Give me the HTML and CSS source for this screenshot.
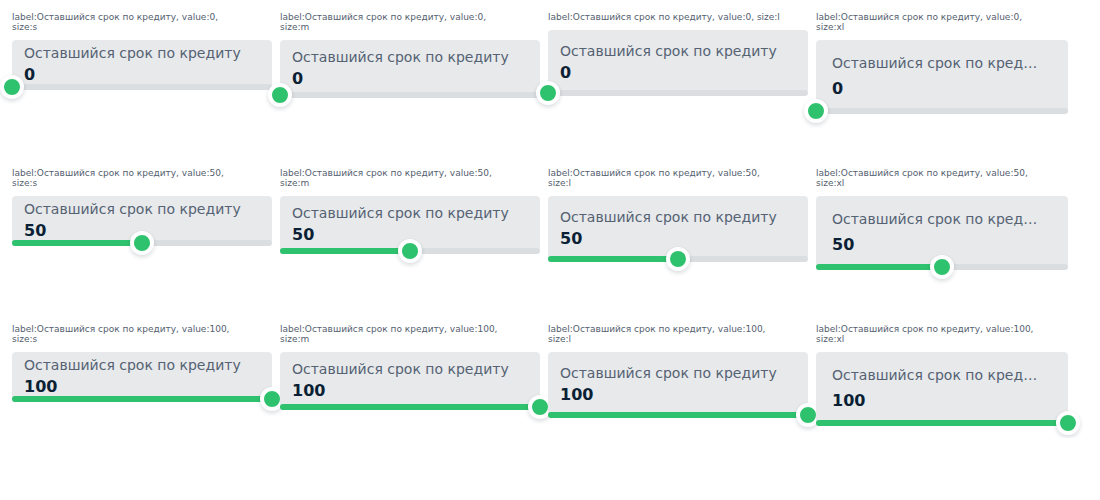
FILE: index.html
```
<!DOCTYPE html>
<html lang="ru">
<head>
<meta charset="utf-8">
<title>Slider input</title>
<link rel="stylesheet" href="styles.css">
</head>
<body>
<main class="gallery" id="gallery"></main>
<script src="main.js"></script>
</body>
</html>
```
FILE: styles.css
```
body {
  margin: 0;
  background: #fff;
  font-family: "DejaVu Sans", sans-serif;
}

.gallery {
  display: grid;
  grid-template-columns: repeat(3, minmax(0, 65fr)) minmax(0, 63fr);
  gap: 54px 8px;
  padding: 12px 32px 12px 12px;
}

.example {
  isolation: isolate;
}

.caption {
  margin: 0 0 8px;
  color: #54606f;
  font-size: 9px;
  line-height: 10px;
}

.field {
  display: flex;
  flex-direction: column;
  justify-content: center;
  box-sizing: border-box;
  padding: 0 12px;
  border-radius: 4px;
  background: #e7e9eb;
}

.field--s { height: 48px; }
.field--m { height: 56px; }
.field--l { height: 64px; }

.field--xl {
  gap: 4px;
  height: 72px;
  padding: 0 28px 0 16px;
}

.label {
  overflow: hidden;
  color: #556273;
  font-size: 14px;
  line-height: 22px;
  text-overflow: ellipsis;
  white-space: nowrap;
}

.value {
  width: 100%;
  height: 22px;
  box-sizing: border-box;
  padding: 0;
  border: 0;
  outline: 0;
  background: transparent;
  color: #0b1f35;
  font: bold 16px/22px "DejaVu Sans", sans-serif;
}

.slider {
  position: relative;
  height: 6px;
  margin-top: -4px;
  border-radius: 3px;
  background: #dbdee1;
}

.fill {
  height: 100%;
  border-radius: 3px;
  background: #2fc26e;
}

/* Extends half a thumb past each end so the thumb is centred on the track edge. */
.range {
  position: absolute;
  top: -9px;
  left: -12px;
  width: calc(100% + 24px);
  height: 24px;
  margin: 0;
  background: transparent;
  appearance: none;
  cursor: pointer;
}

.range::-webkit-slider-runnable-track {
  height: 24px;
  background: transparent;
}

.range::-webkit-slider-thumb {
  width: 24px;
  height: 24px;
  box-sizing: border-box;
  border: 4px solid #fff;
  border-radius: 50%;
  background: #2fc26e;
  box-shadow: 0 2px 4px rgba(11, 31, 53, 0.16);
  appearance: none;
}
```
FILE: main.js
```
const label = 'Оставшийся срок по кредиту';
const gallery = document.getElementById('gallery');

for (const value of [0, 50, 100]) {
  for (const size of ['s', 'm', 'l', 'xl']) {
    const id = `value-${size}-${value}`;
    // The shortest caption stays on one line.
    const separator = size === 'l' && value === 0 ? ' ' : '<br>';
    gallery.insertAdjacentHTML('beforeend', `
      <section class="example">
        <p class="caption">label:${label}, value:${value},${separator}size:${size}</p>
        <div class="field field--${size}">
          <label class="label" for="${id}">${label}</label>
          <input class="value" id="${id}" type="text" inputmode="numeric" value="${value}">
        </div>
        <div class="slider">
          <div class="fill" style="width: ${value}%"></div>
          <input class="range" type="range" min="0" max="100" value="${value}" aria-label="${label}">
        </div>
      </section>`);
  }
}

gallery.addEventListener('input', ({ target }) => {
  const example = target.closest('.example');
  const range = example.querySelector('.range');
  const text = example.querySelector('.value');
  if (target === range) {
    text.value = range.value;
  } else {
    range.value = text.value;
  }
  example.querySelector('.fill').style.width = `${range.value}%`;
});
```
